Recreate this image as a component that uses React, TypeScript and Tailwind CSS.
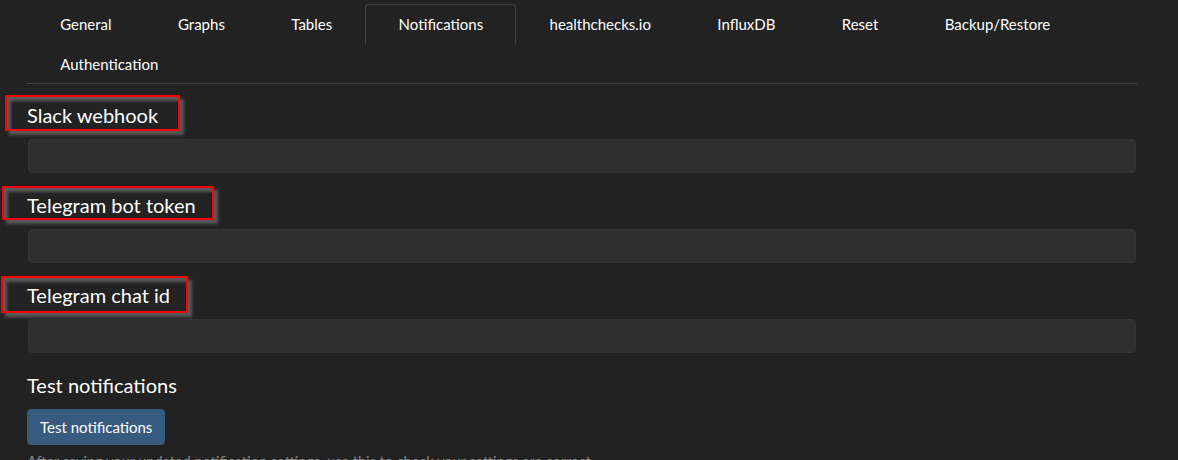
import React from "react";

const tabs = [
  "General",
  "Graphs",
  "Tables",
  "Notifications",
  "healthchecks.io",
  "InfluxDB",
  "Reset",
  "Backup/Restore",
  "Authentication",
];

type Field = {
  label: string;
  // red annotation box drawn over the label in the screenshot
  markClass: string;
};

const fields: Field[] = [
  { label: "Slack webhook", markClass: "-left-[22px] -top-[8px] w-[175px] h-[36px]" },
  { label: "Telegram bot token", markClass: "-left-[25px] -top-[7px] w-[212px] h-[34px]" },
  { label: "Telegram chat id", markClass: "-left-[26px] -top-[7px] w-[187px] h-[37px]" },
];

function Mark({ className }: { className: string }) {
  return (
    <span
      className={`pointer-events-none absolute border-2 border-[#f00] shadow-[4px_4px_3px_rgba(95,95,95,0.9),inset_4px_4px_3px_rgba(95,95,95,0.9)] ${className}`}
    />
  );
}

export default function App() {
  return (
    <div className="h-screen overflow-hidden bg-[#222] font-['Lato','Noto_Sans',sans-serif] text-[15px] leading-[1.5] text-white">
      <div className="ml-[27px] w-[1110px] pt-[4px]">
        {/* Settings tabs */}
        <ul className="flex flex-wrap border-b border-[#444]">
          {tabs.map((t) => {
            const active = t === "Notifications";
            return (
              <li key={t}>
                <a
                  className={`block rounded-t-[4px] border px-[32.2px] pt-[9px] pb-[7px] leading-[21.5px] ${
                    active ? "border-[#444] border-b-transparent" : "border-transparent"
                  }`}
                >
                  {t}
                </a>
              </li>
            );
          })}
        </ul>

        <div className="pt-[19px]">
          {fields.map((f, i) => (
            <div key={f.label} className={i === 0 ? "mb-[20px]" : "mb-[20px] mt-[1px]"}>
              <h5 className="relative mb-[12px] w-fit text-[20px] leading-[24px] font-normal">
                <Mark className={f.markClass} />
                {f.label}
              </h5>
              <input
                type="text"
                className="ml-px block h-[34px] w-[1108px] rounded-[4px] border border-[#333] bg-[#2f2f2f] px-3 text-white outline-none"
              />
            </div>
          ))}

          <div>
            <h5 className="mb-[12px] text-[20px] leading-[24px] font-normal">Test notifications</h5>
            <button
              type="button"
              className="h-[36px] rounded-[4px] border border-[#375a7f] bg-[#375a7f] px-[12px] text-[15px] leading-[22px] text-white"
            >
              Test notifications
            </button>
            <p className="mt-[6px] text-[14.5px] leading-[22px] text-[#888]">
              After saving your updated notification settings, use this to check your settings are correct.
            </p>
          </div>
        </div>
      </div>
    </div>
  );
}
